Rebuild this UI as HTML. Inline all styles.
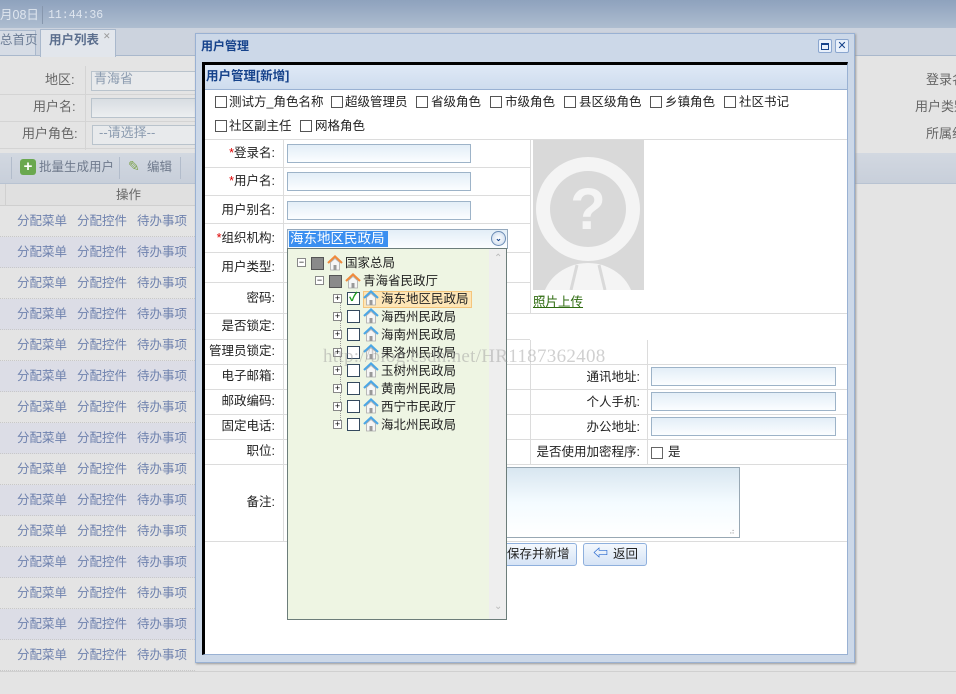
<!DOCTYPE html>
<html><head><meta charset="utf-8">
<style>
*{margin:0;padding:0;box-sizing:border-box}
body{width:956px;height:694px;overflow:hidden;background:#e4e4e4;font-family:"Liberation Sans","Noto Sans CJK SC","WenQuanYi Zen Hei",sans-serif;font-size:12px;line-height:1.15;color:#222;position:relative}
.a{position:absolute;white-space:nowrap}
.gl{color:#666;font-size:13px}
.row{position:absolute;left:0;width:195px;height:31px;border-bottom:1px dotted #c8c8c8}
.row span{position:absolute;top:8px;color:#6f82ae;font-size:12.5px}
.cb{position:absolute;width:12px;height:12px;border:1px solid #555;background:#fff}
.lbl{position:absolute;text-align:right;font-size:12.5px;color:#222}
.inp{position:absolute;height:19px;border:1px solid #9db3c8;background:linear-gradient(#e3eef7,#fbfdff)}
.hl{position:absolute;height:1px;background:#dcdcdc}
.vl{position:absolute;width:1px;background:#dcdcdc}
.tn{position:absolute;font-size:12.5px;color:#222}
.ex{position:absolute;width:9px;height:9px;border:1px solid #888;background:#fff;font-size:9px;line-height:7px;text-align:center;color:#000}
.tcb{position:absolute;width:13px;height:13px;border:1px solid #34495e;background:#fff}
.house{position:absolute;width:16px;height:16px}
</style></head><body>
<div class="a" style="left:0;top:0;width:956px;height:28px;background:linear-gradient(#8ea2bd,#aebdd0)"></div>
<div class="a" style="left:0;top:8px;color:#dfe6ef;font-size:12.5px">月08日</div>
<div class="a" style="left:42px;top:6px;width:1px;height:18px;background:#8797ad"></div>
<div class="a" style="left:48px;top:9px;color:#dfe6ef;font-size:11.5px;font-family:'Liberation Mono',monospace">11:44:36</div>
<div class="a" style="left:0;top:28px;width:956px;height:28px;background:#ccd3de;border-bottom:1px solid #a9b8cc"></div>
<div class="a" style="left:-4px;top:30px;width:40px;height:26px;border:1px solid #a9b8cc;background:#d6dce5"></div>
<div class="a" style="left:0;top:33px;color:#6b7c95;font-size:12.5px">总首页</div>
<div class="a" style="left:40px;top:29px;width:76px;height:28px;border:1px solid #a9b8cc;border-bottom:none;background:#e2e6ec"></div>
<div class="a" style="left:49px;top:33px;color:#5c6f8e;font-size:12.5px;font-weight:bold">用户列表</div>
<div class="a" style="left:103px;top:31px;color:#999;font-size:9px">✕</div>
<div class="a" style="left:0;top:57px;width:956px;height:96px;background:#e4e4e4"></div>
<div class="hl" style="left:0;top:94px;width:195px;background:#d4d4d4"></div>
<div class="hl" style="left:0;top:121px;width:195px;background:#d4d4d4"></div>
<div class="hl" style="left:0;top:148px;width:195px;background:#d4d4d4"></div>
<div class="vl" style="left:85px;top:66px;height:84px;background:#d4d4d4"></div>
<div class="a gl" style="left:45px;top:73px">地区:</div>
<div class="a" style="left:91px;top:71px;width:110px;height:20px;border:1px solid #b9c3cc;background:#e8eaec;color:#8c9cb0;font-size:13px;padding-left:2px">青海省</div>
<div class="a gl" style="left:33px;top:100px">用户名:</div>
<div class="a" style="left:91px;top:98px;width:110px;height:20px;border:1px solid #b9c3cc;background:linear-gradient(#d8dde2,#eceef0)"></div>
<div class="a gl" style="left:22px;top:127px">用户角色:</div>
<div class="a" style="left:92px;top:125px;width:110px;height:20px;border:1px solid #b9c3cc;background:#e8eaec;color:#8c9cb0;font-size:13px;padding-left:6px">--请选择--</div>
<div class="a" style="left:0;top:153px;width:956px;height:31px;background:linear-gradient(#d2d8e1,#c8cfda);border-bottom:1px solid #b8c3d2"></div>
<div class="a" style="left:11px;top:157px;width:1px;height:22px;background:#b2bccb"></div>
<div class="a" style="left:20px;top:159px;width:16px;height:16px;border-radius:3px;background:#6aa84f;color:#fff;font-weight:bold;text-align:center;line-height:16px;font-size:15px">+</div>
<div class="a" style="left:39px;top:160px;color:#6f7a8c;font-size:12.5px">批量生成用户</div>
<div class="a" style="left:119px;top:157px;width:1px;height:22px;background:#b2bccb"></div>
<div class="a" style="left:128px;top:158px;color:#7fa34f;font-size:14px">✎</div>
<div class="a" style="left:147px;top:160px;color:#6f7a8c;font-size:12.5px">编辑</div>
<div class="a" style="left:180px;top:157px;width:1px;height:22px;background:#b2bccb"></div>
<div class="a" style="left:0;top:184px;width:956px;height:22px;background:#e0e0e0;border-bottom:1px solid #cfcfcf"></div>
<div class="a" style="left:5px;top:184px;width:1px;height:22px;background:#d0d0d0"></div>
<div class="a gl" style="left:116px;top:188px;font-size:12.5px">操作</div>
<div class="a" style="left:645px;top:184px;width:311px;height:22px;background:#e4e4e4"></div>
<div class="a gl" style="left:926px;top:73px">登录名</div>
<div class="a gl" style="left:915px;top:100px">用户类别</div>
<div class="a gl" style="left:926px;top:127px">所属组</div>

<div id="rows"></div>
<script>
var h='';for(var i=0;i<15;i++){var t=206+i*31;h+='<div class="row" style="top:'+t+'px;background:'+(i%2?'#dcdde6':'#e4e4e4')+'"><span style="left:17px">分配菜单</span><span style="left:77px">分配控件</span><span style="left:137px">待办事项</span></div>'}
document.getElementById('rows').innerHTML=h;
</script>
<div class="a" style="left:0;top:671px;width:956px;height:23px;background:#e4e4e4;border-top:1px solid #d0d0d0"></div>

<div class="a" style="left:195px;top:33px;width:660px;height:630px;background:#ccd8e8;border:1px solid #99b1d3;box-shadow:1px 1px 2px #999"></div>
<div class="a" style="left:201px;top:40px;color:#15428b;font-weight:bold;font-size:12px">用户管理</div>
<div class="a" style="left:818px;top:39px;width:14px;height:14px;border:1px solid #8aa6cf;border-radius:2px;background:#e8f0fb"><div style="margin:3px 2px;height:7px;border:1px solid #15428b;border-top-width:2px"></div></div>
<div class="a" style="left:835px;top:39px;width:14px;height:14px;border:1px solid #8aa6cf;border-radius:2px;background:#e8f0fb;color:#15428b;font-size:11px;line-height:12px;text-align:center">✕</div>
<div class="a" style="left:202px;top:62px;width:646px;height:593px;background:#fff;border-top:3px solid #000;border-left:3px solid #000;border-right:1px solid #99b1d3;border-bottom:1px solid #99b1d3"></div>
<div class="a" style="left:205px;top:65px;width:642px;height:25px;background:linear-gradient(#dfe9f6,#cedcee);border-bottom:1px solid #99b1d3"></div>
<div class="a" style="left:206px;top:69px;color:#15428b;font-weight:bold;font-size:12.5px">用户管理[新增]</div>

<div class="cb" style="left:215px;top:96px"></div><div class="a" style="left:229px;top:95px;font-size:12.5px">测试方_角色名称</div>
<div class="cb" style="left:331px;top:96px"></div><div class="a" style="left:345px;top:95px;font-size:12.5px">超级管理员</div>
<div class="cb" style="left:416px;top:96px"></div><div class="a" style="left:431px;top:95px;font-size:12.5px">省级角色</div>
<div class="cb" style="left:490px;top:96px"></div><div class="a" style="left:505px;top:95px;font-size:12.5px">市级角色</div>
<div class="cb" style="left:564px;top:96px"></div><div class="a" style="left:579px;top:95px;font-size:12.5px">县区级角色</div>
<div class="cb" style="left:650px;top:96px"></div><div class="a" style="left:665px;top:95px;font-size:12.5px">乡镇角色</div>
<div class="cb" style="left:724px;top:96px"></div><div class="a" style="left:739px;top:95px;font-size:12.5px">社区书记</div>
<div class="cb" style="left:215px;top:120px"></div><div class="a" style="left:229px;top:119px;font-size:12.5px">社区副主任</div>
<div class="cb" style="left:300px;top:120px"></div><div class="a" style="left:315px;top:119px;font-size:12.5px">网格角色</div>

<div class="hl" style="left:205px;top:139px;width:642px"></div>
<div class="hl" style="left:205px;top:167px;width:325px"></div>
<div class="hl" style="left:205px;top:195px;width:325px"></div>
<div class="hl" style="left:205px;top:223px;width:325px"></div>
<div class="hl" style="left:205px;top:252px;width:325px"></div>
<div class="hl" style="left:205px;top:282px;width:325px"></div>
<div class="hl" style="left:205px;top:313px;width:642px"></div>
<div class="hl" style="left:205px;top:339px;width:325px"></div>
<div class="hl" style="left:205px;top:364px;width:642px"></div>
<div class="hl" style="left:205px;top:389px;width:642px"></div>
<div class="hl" style="left:205px;top:414px;width:642px"></div>
<div class="hl" style="left:205px;top:439px;width:642px"></div>
<div class="hl" style="left:205px;top:464px;width:642px"></div>
<div class="hl" style="left:205px;top:541px;width:642px"></div>
<div class="vl" style="left:283px;top:139px;height:402px"></div>
<div class="vl" style="left:530px;top:139px;height:175px"></div>
<div class="vl" style="left:530px;top:340px;height:125px"></div>
<div class="vl" style="left:647px;top:340px;height:125px"></div>

<div class="lbl" style="left:205px;width:70px;top:146px"><span style="color:#d00">*</span>登录名:</div>
<div class="lbl" style="left:205px;width:70px;top:174px"><span style="color:#d00">*</span>用户名:</div>
<div class="lbl" style="left:205px;width:70px;top:203px">用户别名:</div>
<div class="lbl" style="left:205px;width:70px;top:231px"><span style="color:#d00">*</span>组织机构:</div>
<div class="lbl" style="left:205px;width:70px;top:260px">用户类型:</div>
<div class="lbl" style="left:205px;width:70px;top:291px">密码:</div>
<div class="lbl" style="left:205px;width:70px;top:319px">是否锁定:</div>
<div class="lbl" style="left:205px;width:70px;top:344px">管理员锁定:</div>
<div class="lbl" style="left:205px;width:70px;top:369px">电子邮箱:</div>
<div class="lbl" style="left:205px;width:70px;top:394px">邮政编码:</div>
<div class="lbl" style="left:205px;width:70px;top:419px">固定电话:</div>
<div class="lbl" style="left:205px;width:70px;top:444px">职位:</div>
<div class="lbl" style="left:205px;width:70px;top:495px">备注:</div>
<div class="inp" style="left:287px;top:144px;width:184px"></div>
<div class="inp" style="left:287px;top:172px;width:184px"></div>
<div class="inp" style="left:287px;top:201px;width:184px"></div>

<div class="a" style="left:533px;top:140px;width:111px;height:150px;background:#d9d9d9;overflow:hidden">
<svg width="111" height="150"><circle cx="55" cy="69" r="52" fill="#f4f4f4"/><circle cx="55" cy="69" r="38" fill="#d9d9d9"/><text x="55" y="89" font-size="58" font-weight="bold" fill="#f4f4f4" text-anchor="middle" font-family="Liberation Sans">?</text><ellipse cx="55" cy="165" rx="46" ry="42" fill="#f4f4f4"/><path d="M38 150 L44 125 M72 150 L66 125" stroke="#d9d9d9" stroke-width="3"/></svg></div>
<div class="a" style="left:533px;top:295px;color:#2e6b0f;text-decoration:underline;font-size:12.5px">照片上传</div>

<div class="lbl" style="left:540px;width:100px;top:370px">通讯地址:</div>
<div class="lbl" style="left:540px;width:100px;top:395px">个人手机:</div>
<div class="lbl" style="left:540px;width:100px;top:420px">办公地址:</div>
<div class="lbl" style="left:520px;width:120px;top:445px">是否使用加密程序:</div>
<div class="inp" style="left:651px;top:367px;width:185px"></div>
<div class="inp" style="left:651px;top:392px;width:185px"></div>
<div class="inp" style="left:651px;top:417px;width:185px"></div>
<div class="cb" style="left:651px;top:447px;border-color:#666"></div>
<div class="a" style="left:668px;top:445px;font-size:12.5px">是</div>
<div class="a" style="left:480px;top:467px;width:260px;height:71px;border:1px solid #98a8b4;background:linear-gradient(#d8e6f0,#f4fbff 50%,#fff)"></div>
<div class="a" style="left:729px;top:527px;color:#aaa;font-size:8px">⠴</div>
<div class="a" style="left:480px;top:543px;width:97px;height:23px;border:1px solid #8fb0dd;border-radius:3px;background:linear-gradient(#f4f8fd,#d6e4f6)"></div>
<div class="a" style="left:507px;top:547px;font-size:12.5px">保存并新增</div>
<div class="a" style="left:583px;top:543px;width:64px;height:23px;border:1px solid #8fb0dd;border-radius:3px;background:linear-gradient(#f4f8fd,#d6e4f6)"></div>
<div class="a" style="left:593px;top:545px;color:#2a6ad0;font-size:15px;font-weight:bold">⇦</div>
<div class="a" style="left:613px;top:547px;font-size:12.5px">返回</div>

<div class="a" style="left:287px;top:229px;width:221px;height:20px;border:1px solid #95a9bd;background:linear-gradient(#e3eef7,#fbfdff)"></div>
<div class="a" style="left:289px;top:231px;width:99px;height:16px;background:#3b8ff0"></div>
<div class="a" style="left:290px;top:231px;color:#fff;font-size:13.5px">海东地区民政局</div>
<div class="a" style="left:491px;top:231px;width:15px;height:15px;border-radius:50%;border:1px solid #6d8db5;background:radial-gradient(#fff,#c8d8ec);color:#15428b;font-size:8px;line-height:13px;text-align:center;font-weight:bold">⌄</div>
<div class="a" style="left:287px;top:248px;width:220px;height:372px;border:1px solid #6c7d7a;background:#eef5e3"></div>
<div class="a" style="left:489px;top:249px;width:17px;height:370px;background:#eeeeee"></div>
<div class="a" style="left:494px;top:253px;color:#bbb;font-size:10px">⌃</div>
<div class="a" style="left:494px;top:601px;color:#bbb;font-size:10px">⌄</div>
<div class="a" style="left:340px;top:303px;width:1px;height:125px;border-left:1px dotted #999"></div>

<div id="tree"></div>
<script>
function house(x,y,c){return '<svg class="house" style="left:'+x+'px;top:'+y+'px" viewBox="0 0 16 16"><path d="M1 8 L8 1.5 L15 8" fill="none" stroke="'+c+'" stroke-width="2.2"/><path d="M3.5 7.5 L8 3.5 L12.5 7.5 V15 H3.5Z" fill="#f6f6f6" stroke="#aaa" stroke-width=".8"/><rect x="6.5" y="10" width="3" height="5" fill="#999"/></svg>'}
var t='';
t+='<div class="ex" style="left:297px;top:258px">−</div><div class="tcb" style="left:311px;top:257px;background:#8a8a8a;border-color:#555"></div>'+house(327,255,'#f08a3c')+'<div class="tn" style="left:345px;top:256px">国家总局</div>';
t+='<div class="ex" style="left:315px;top:276px">−</div><div class="tcb" style="left:329px;top:275px;background:#8a8a8a;border-color:#555"></div>'+house(345,273,'#f08a3c')+'<div class="tn" style="left:363px;top:274px">青海省民政厅</div>';
var n=['海东地区民政局','海西州民政局','海南州民政局','果洛州民政局','玉树州民政局','黄南州民政局','西宁市民政厅','海北州民政局'];
for(var i=0;i<8;i++){var y=299+i*18;
t+='<div class="ex" style="left:333px;top:'+(y-5)+'px">+</div><div class="tcb" style="left:347px;top:'+(y-7)+'px"></div>';
if(i==0)t+='<div class="a" style="left:363px;top:291px;width:109px;height:17px;background:#fde5b6;border:1px solid #f5c57c"></div><div class="a" style="left:349px;top:291px;color:#1a9a1a;font-size:12px;font-weight:bold">✓</div>';
t+=house(363,y-9,'#4aa6e6')+'<div class="tn" style="left:381px;top:'+(y-7)+'px">'+n[i]+'</div>';}
document.getElementById('tree').innerHTML=t;
</script>
<div class="a" style="left:323px;top:346px;color:rgba(150,150,150,.45);font-family:'Liberation Serif',serif;font-size:19px;letter-spacing:0.3px;z-index:5">http://blog.csdn.net/HR1187362408</div>
</body></html>
